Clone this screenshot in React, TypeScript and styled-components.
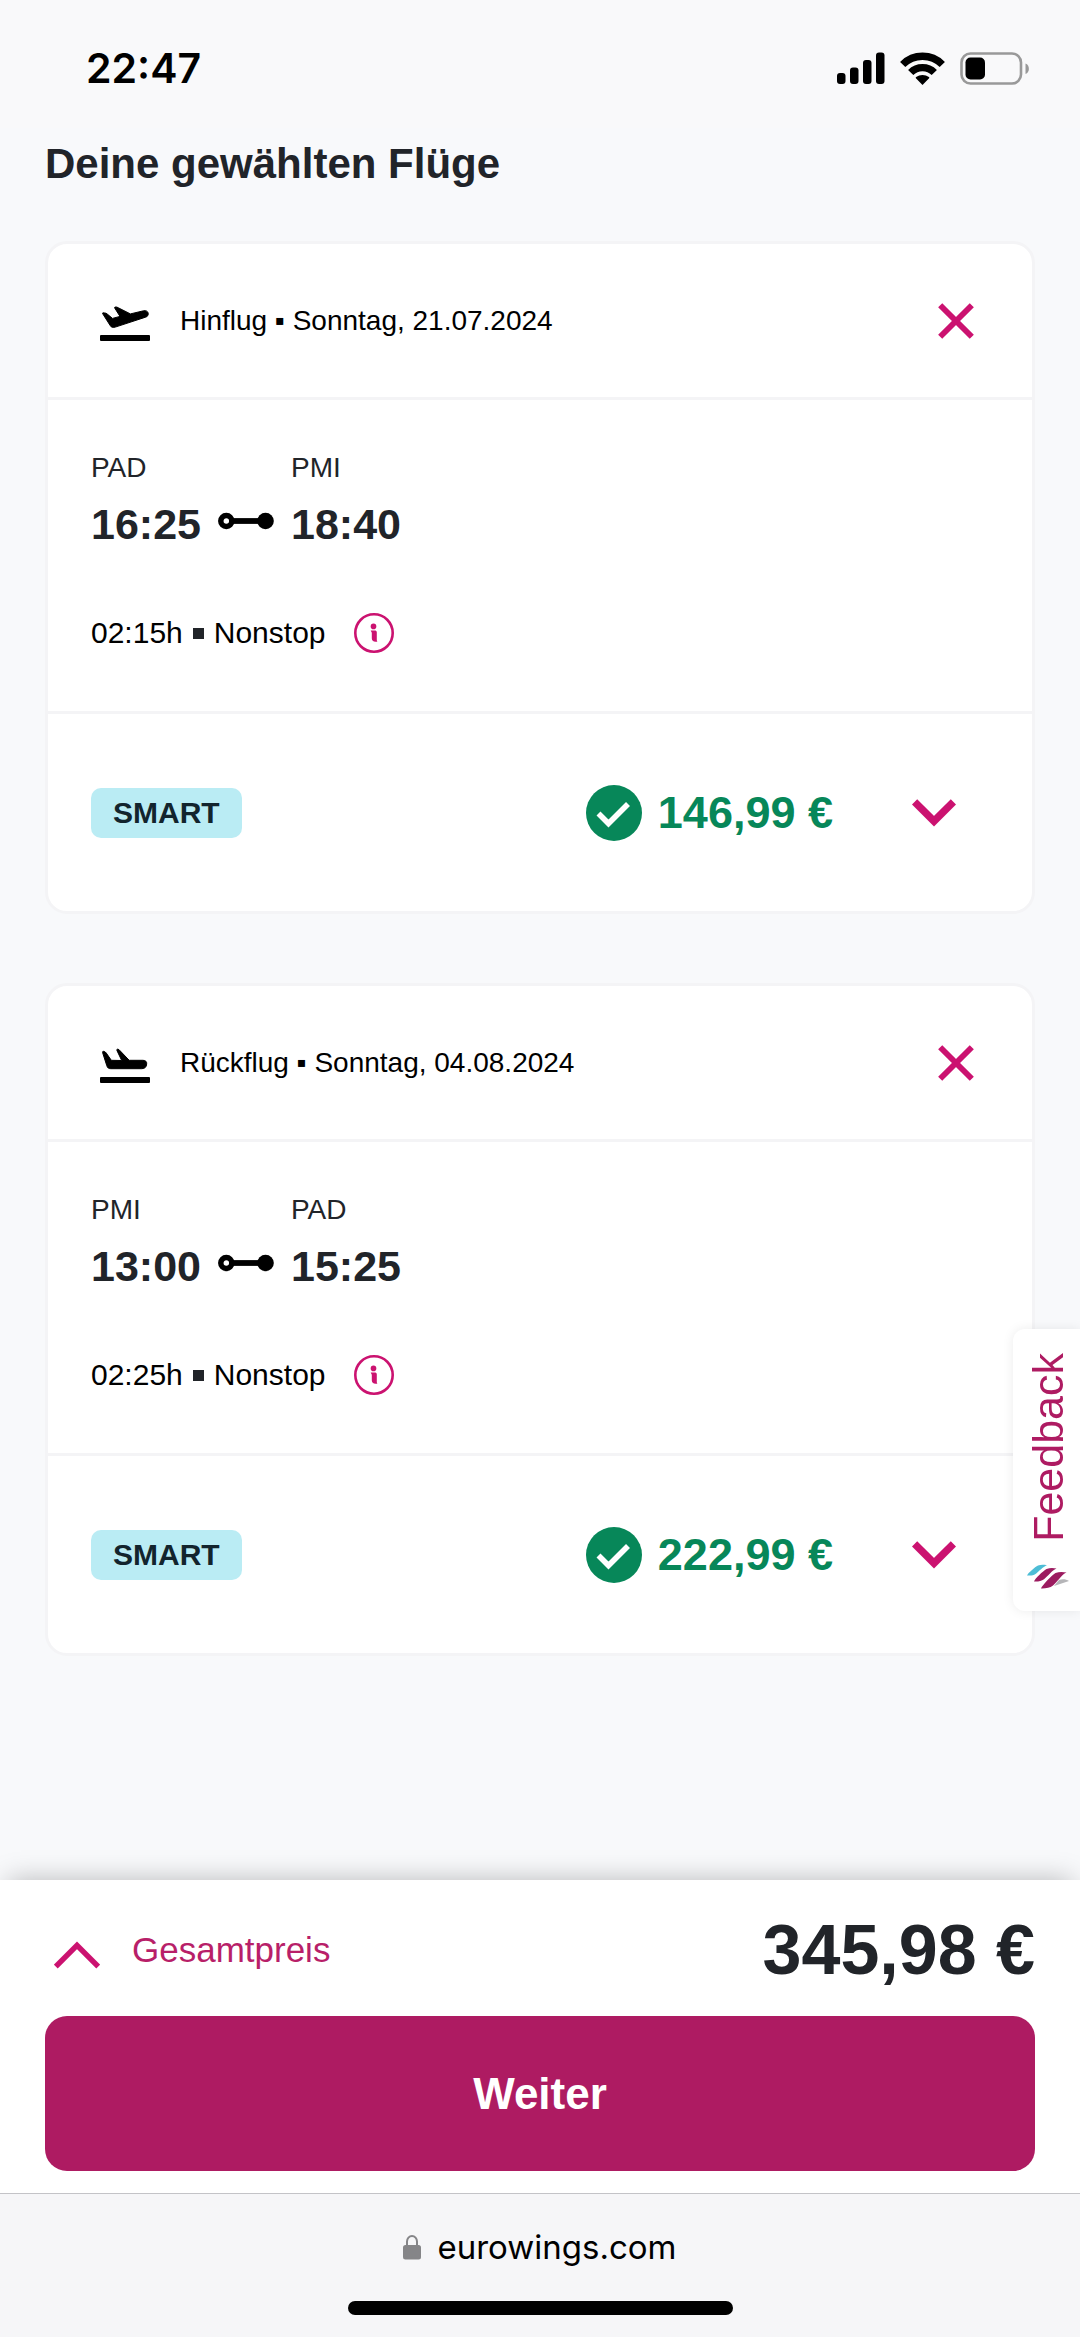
import React from "react";
import styled, { createGlobalStyle } from "styled-components";

const sans = `"Liberation Sans", Arial, Helvetica, sans-serif`;
const system = `Inter, "Liberation Sans", sans-serif`;

const color = {
  page: "#f8f9fb",
  line: "#f4f4f6",
  ink: "#212429",
  pink: "#cb1270",
  berry: "#ae1b62",
  green: "#078759",
  sky: "#baecf4",
};

const GlobalStyle = createGlobalStyle`
  * { box-sizing: border-box; }
  body {
    margin: 0;
    background: ${color.page};
    color: ${color.ink};
    font-family: ${sans};
  }
  h1, h2, p { margin: 0; }
  svg { display: block; flex: none; }
`;

const Page = styled.div`
  display: flex;
  flex-direction: column;
  min-height: 100vh;
`;

const StatusBar = styled.header`
  display: flex;
  align-items: center;
  justify-content: space-between;
  height: 128px;
  padding: 8px 51px 0 86px;
  background: #f9f9fa;
  color: #000;
  font: 600 41px/48px ${system};
`;

const StatusIcons = styled.div`
  display: flex;
  align-items: center;
  gap: 15px;
`;

const Main = styled.main`
  flex: 1;
  padding: 12px 45px 64px;
`;

const Title = styled.h1`
  margin-bottom: 53px;
  font-size: 42px;
  line-height: 48px;
`;

const Flights = styled.div`
  display: grid;
  gap: 69px;
`;

const Card = styled.article`
  border: 3px solid ${color.line};
  border-radius: 22px;
  background: #fff;
`;

const CardHeader = styled.header`
  display: flex;
  align-items: center;
  gap: 30px;
  height: 156px;
  padding: 0 58px 0 52px;
  border-bottom: 3px solid ${color.line};
  color: #000;
`;

const CardTitle = styled.h2`
  flex: 1;
  font-size: 28px;
  font-weight: 400;
  line-height: 36px;
`;

const IconButton = styled.button`
  display: flex;
  padding: 0;
  border: 0;
  background: none;
  color: ${color.pink};
  cursor: pointer;
`;

const Itinerary = styled.section`
  padding: 50px 43px 58px;
  border-bottom: 3px solid ${color.line};
`;

const Route = styled.div`
  display: flex;
  align-items: flex-end;
  gap: 17px;
`;

const Stop = styled.div`
  display: grid;
  gap: 14px;
`;

const Airport = styled.span`
  font-size: 28px;
  line-height: 36px;
`;

const Time = styled.time`
  font-size: 43px;
  font-weight: 700;
  line-height: 48px;
`;

const RouteMark = styled.div`
  display: flex;
  align-items: center;
  height: 50px;
  padding-bottom: 4px;
`;

const Details = styled.div`
  display: flex;
  align-items: center;
  gap: 10px;
  margin-top: 65px;
  color: #000;
  font-size: 30px;
  line-height: 40px;
`;

const Square = styled.span`
  width: 11px;
  height: 11px;
  background: ${color.ink};
`;

const InfoButton = styled(IconButton)`
  margin-left: 18px;
`;

const Fare = styled.footer`
  display: flex;
  align-items: center;
  height: 197px;
  padding: 0 76px 0 43px;
`;

const Badge = styled.span`
  padding: 0 22px;
  border-radius: 10px;
  background: ${color.sky};
  color: #12242d;
  font-size: 30px;
  font-weight: 700;
  line-height: 50px;
`;

const Price = styled.p`
  display: flex;
  align-items: center;
  gap: 16px;
  margin-left: auto;
  margin-right: 79px;
  color: ${color.green};
  font-size: 45px;
  font-weight: 700;
  line-height: 56px;
`;

const FeedbackTab = styled.button`
  position: fixed;
  top: 1329px;
  right: 0;
  display: flex;
  flex-direction: column;
  align-items: center;
  gap: 22px;
  padding: 24px 11px 22px 14px;
  border: 0;
  border-radius: 12px 0 0 12px;
  background: #fff;
  box-shadow: 0 0 12px rgba(0, 0, 0, 0.08);
  color: ${color.berry};
  font: 400 43px/42px ${sans};
  cursor: pointer;
`;

const SideText = styled.span`
  writing-mode: vertical-rl;
  rotate: 180deg;
`;

const Checkout = styled.section`
  display: grid;
  gap: 26px;
  padding: 30px 45px 22px;
  background: #fff;
  box-shadow: 0 -8px 26px -8px rgba(0, 0, 0, 0.26);
`;

const TotalRow = styled.div`
  display: flex;
  align-items: center;
  justify-content: space-between;
`;

const TotalToggle = styled(IconButton)`
  align-items: center;
  gap: 32px;
  padding-left: 9px;
  font: 400 35px/40px ${sans};
`;

const ToggleLabel = styled.span`
  color: #b81f69;
`;

const Total = styled.strong`
  font-size: 70px;
  line-height: 80px;
`;

const NextButton = styled.button`
  height: 155px;
  border: 0;
  border-radius: 22px;
  background: ${color.berry};
  color: #fff;
  font: 700 44px/56px ${sans};
  cursor: pointer;
`;

const BrowserBar = styled.footer`
  display: flex;
  flex-direction: column;
  align-items: center;
  gap: 34px;
  padding: 33px 0 22px;
  border-top: 1px solid #c3c3c7;
  background: #f6f6f8;
`;

const Address = styled.a`
  display: flex;
  align-items: center;
  gap: 16px;
  color: #000;
  font: 400 33px/40px ${system};
  text-decoration: none;
`;

const HomeIndicator = styled.div`
  width: 385px;
  height: 14px;
  border-radius: 7px;
  background: #000;
`;

const SignalIcon = () => (
  <svg width="48" height="32" viewBox="0 0 48 32" aria-hidden="true">
    <rect x="0" y="21" width="8.5" height="11" rx="3" />
    <rect x="13" y="15.5" width="8.5" height="16.5" rx="3" />
    <rect x="26" y="8" width="8.5" height="24" rx="3" />
    <rect x="39" y="0.5" width="8.5" height="31.5" rx="3" />
  </svg>
);

const WifiIcon = () => (
  <svg width="45" height="33" viewBox="0 0 45 33" aria-hidden="true">
    <g fill="none" stroke="#000" strokeWidth="7.4">
      <path d="M2.7 12.5a28 28 0 0 1 39.6 0" />
      <path d="M10.7 20.5a16.7 16.7 0 0 1 23.6 0" />
    </g>
    <path d="M22.5 33l-6.600-6.700c-.4-.5-.3-.9.200-1.200a10.500 10.500 0 0 1 12.800 0c.5.3.6.700.2 1.200z" />
  </svg>
);

const BatteryIcon = () => (
  <svg width="69" height="33" viewBox="0 0 69 33" aria-hidden="true">
    <rect x="1.5" y="1.5" width="59.5" height="30" rx="9" fill="none" stroke="#999" strokeWidth="2.6" />
    <rect x="5.500" y="5.500" width="19.500" height="22" rx="5" />
    <path d="M65.500 11.500c4.500 1.500 4.500 9 0 10.500z" fill="#999" />
  </svg>
);

const TakeoffIcon = () => (
  <svg width="50" height="40" viewBox="0 -6 50 40" aria-hidden="true">
    <path
      stroke="#000"
      strokeLinejoin="round"
      d="M2.600 6.600C2.200 5.900 3 5.700 4.200 5.900c1.400.1 2.300.4 3.100 1.200l5.200 4.300 7.500-2-5.200-8.200c-.5-.8-.1-1.100.7-1.200 1-.1 1.800.1 2.600.7l12.300 6.200 13.100-3.100c2.300-.5 4.300.3 4.700 2.400.4 1.900-.7 3.400-2.700 4L15.300 20.100c-2.400.7-4 .3-5-1.400z"
    />
    <rect y="28" width="50" height="6" rx="1" />
  </svg>
);

const LandingIcon = () => (
  <svg width="50" height="40" viewBox="0 -6 50 40" aria-hidden="true">
    <path
      stroke="#000"
      strokeLinejoin="round"
      d="M2.600 3.600c-.2-1 .3-1.400 1.200-1.200 1.100.2 1.900.8 2.500 1.700l5 7.200 10.400.2L16.900 1.400c-.3-.9.100-1.300.9-1.200 1 .1 1.500.6 2.100 1.400l9.300 9.700h13.700c2.700 0 4 1.400 3.800 3.600-.2 3.200-2 4.800-5 4.800H10.800c-2.200 0-3.400-.9-4-3z"
    />
    <rect y="28" width="50" height="6" rx="1" />
  </svg>
);

const CloseIcon = () => (
  <svg width="36" height="36" viewBox="0 0 36 36" fill="none" stroke="currentColor" strokeWidth="5.800" aria-hidden="true">
    <path d="M2.200 2.200l31.600 31.600M33.800 2.200L2.200 33.800" />
  </svg>
);

const RouteIcon = () => (
  <svg width="56" height="18" viewBox="0 0 56 18" aria-hidden="true">
    <path d="M12 9h32" stroke="#000" strokeWidth="5.800" />
    <circle cx="8.300" cy="9" r="5.500" fill="#fff" stroke="#000" strokeWidth="5.500" />
    <circle cx="47.500" cy="9" r="8.300" />
  </svg>
);

const InfoIcon = () => (
  <svg width="40" height="40" viewBox="0 0 40 40" fill="currentColor" aria-hidden="true">
    <circle cx="20" cy="20" r="18.700" fill="none" stroke="currentColor" strokeWidth="2.600" />
    <circle cx="19.500" cy="13.400" r="2.800" />
    <path d="M16.700 17.400h3.800c1.500 0 2.300.6 2.300 1.800v8l.5 1.500h-1.600c-2.600 0-3.900-1.200-3.900-3.400v-5.500z" />
  </svg>
);

const CheckIcon = () => (
  <svg width="56" height="56" viewBox="0 0 56 56" aria-hidden="true">
    <circle cx="28" cy="28" r="28" fill="currentColor" />
    <path d="M12.500 28.500L22.500 38.500 42 19" fill="none" stroke="#fff" strokeWidth="5.600" />
  </svg>
);

const ChevronDown = () => (
  <svg width="44" height="28" viewBox="0 0 44 28" fill="none" stroke="currentColor" strokeWidth="7.400" aria-hidden="true">
    <path d="M2.600 2.900L22 22.200 41.400 2.900" />
  </svg>
);

const ChevronUp = () => (
  <svg width="46" height="40" viewBox="0 0 46 40" fill="none" stroke="currentColor" strokeWidth="5.400" aria-hidden="true">
    <path d="M1.800 36.500L23 15.300 44.200 36.500" />
  </svg>
);

const LockIcon = () => (
  <svg width="18" height="26" viewBox="0 0 18 26" fill="#858588" aria-hidden="true">
    <rect y="11" width="18" height="14.500" rx="2.500" />
    <path d="M4 12V7.500a5 5.500 0 0 1 10 0V12" fill="none" stroke="#858588" strokeWidth="2" />
  </svg>
);

const WingsLogo = () => (
  <svg width="42" height="25" viewBox="0 0 42 25" aria-hidden="true">
    <path d="M27 22l15-5c-3-2-7-2-10-1z" fill="#b5b5b8" />
    <path d="M0 11.500C1 9 8 3 11 1.500c3-1 6-.7 9-.3-3 .8-9 6.800-11.500 8.800-2.500 2-5.500 1.500-8.500 1.500z" fill="#4dbdd6" />
    <path d="M7 17.500C8 14.500 16 7 19.500 5c3.500-1.300 7-1 10-.5-3.500 1-9 8-12.500 10.800-2.800 2.200-6.500 2.400-10 2.200z" fill="#9c1c60" />
    <path d="M14 24.500C15 21.500 24.500 11.500 28.500 9c3.500-1.400 7.500-1.200 11-.5-4 1.200-9.500 9.500-13.500 13-3 2.500-8 3.200-12 3z" fill="#9c1c60" />
  </svg>
);

type Flight = {
  label: string;
  icon: React.ReactNode;
  from: string;
  to: string;
  departs: string;
  arrives: string;
  duration: string;
  price: string;
};

const flights: Flight[] = [
  {
    label: "Hinflug ▪ Sonntag, 21.07.2024",
    icon: <TakeoffIcon />,
    from: "PAD",
    to: "PMI",
    departs: "16:25",
    arrives: "18:40",
    duration: "02:15h",
    price: "146,99 €",
  },
  {
    label: "Rückflug ▪ Sonntag, 04.08.2024",
    icon: <LandingIcon />,
    from: "PMI",
    to: "PAD",
    departs: "13:00",
    arrives: "15:25",
    duration: "02:25h",
    price: "222,99 €",
  },
];

const FlightCard = ({ flight }: { flight: Flight }) => (
  <Card>
    <CardHeader>
      {flight.icon}
      <CardTitle>{flight.label}</CardTitle>
      <IconButton type="button" aria-label="Flug entfernen">
        <CloseIcon />
      </IconButton>
    </CardHeader>
    <Itinerary>
      <Route>
        <Stop>
          <Airport>{flight.from}</Airport>
          <Time>{flight.departs}</Time>
        </Stop>
        <RouteMark>
          <RouteIcon />
        </RouteMark>
        <Stop>
          <Airport>{flight.to}</Airport>
          <Time>{flight.arrives}</Time>
        </Stop>
      </Route>
      <Details>
        <span>{flight.duration}</span>
        <Square />
        <span>Nonstop</span>
        <InfoButton type="button" aria-label="Fluginformationen">
          <InfoIcon />
        </InfoButton>
      </Details>
    </Itinerary>
    <Fare>
      <Badge>SMART</Badge>
      <Price>
        <CheckIcon />
        <span>{flight.price}</span>
      </Price>
      <IconButton type="button" aria-label="Tarifdetails anzeigen">
        <ChevronDown />
      </IconButton>
    </Fare>
  </Card>
);

export default function App() {
  return (
    <>
      <GlobalStyle />
      <Page>
        <StatusBar>
          <span>22:47</span>
          <StatusIcons>
            <SignalIcon />
            <WifiIcon />
            <BatteryIcon />
          </StatusIcons>
        </StatusBar>
        <Main>
          <Title>Deine gewählten Flüge</Title>
          <Flights>
            {flights.map((flight) => (
              <FlightCard key={flight.label} flight={flight} />
            ))}
          </Flights>
        </Main>
        <Checkout>
          <TotalRow>
            <TotalToggle type="button">
              <ChevronUp />
              <ToggleLabel>Gesamtpreis</ToggleLabel>
            </TotalToggle>
            <Total>345,98 €</Total>
          </TotalRow>
          <NextButton type="button">Weiter</NextButton>
        </Checkout>
        <BrowserBar>
          <Address href="#">
            <LockIcon />
            eurowings.com
          </Address>
          <HomeIndicator />
        </BrowserBar>
      </Page>
      <FeedbackTab type="button">
        <SideText>Feedback</SideText>
        <WingsLogo />
      </FeedbackTab>
    </>
  );
}
